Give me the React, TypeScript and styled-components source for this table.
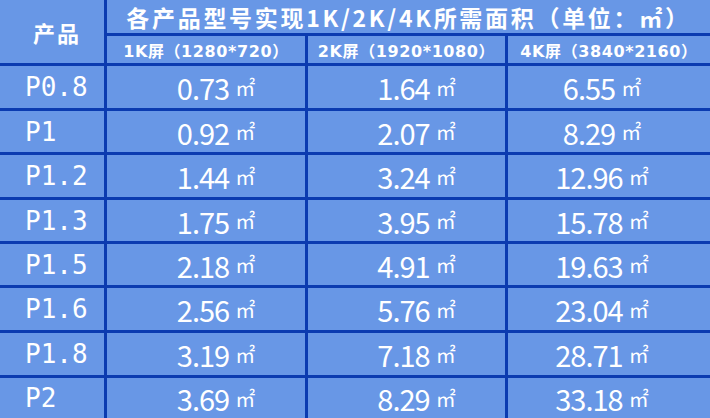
import styled, { createGlobalStyle } from "styled-components";

const GlobalStyle = createGlobalStyle`
  html, body {
    margin: 0;
    padding: 0;
    background: #0b3bb0;
    overflow: hidden;
  }
`;

const rows = [
  { name: "P0.8", k1: "0.73", k2: "1.64", k4: "6.55" },
  { name: "P1", k1: "0.92", k2: "2.07", k4: "8.29" },
  { name: "P1.2", k1: "1.44", k2: "3.24", k4: "12.96" },
  { name: "P1.3", k1: "1.75", k2: "3.95", k4: "15.78" },
  { name: "P1.5", k1: "2.18", k2: "4.91", k4: "19.63" },
  { name: "P1.6", k1: "2.56", k2: "5.76", k4: "23.04" },
  { name: "P1.8", k1: "3.19", k2: "7.18", k4: "28.71" },
  { name: "P2", k1: "3.69", k2: "8.29", k4: "33.18" },
];

export default function App() {
  return (
    <>
      <GlobalStyle />
      <Table>
        <ProductHead>产品</ProductHead>
        <Title>各产品型号实现1K/2K/4K所需面积（单位：㎡）</Title>
        <SubHead>1K屏（1280*720）</SubHead>
        <SubHead>2K屏（1920*1080）</SubHead>
        <SubHead>4K屏（3840*2160）</SubHead>
        {rows.map((r) => (
          <Row key={r.name}>
            <NameCell>{r.name}</NameCell>
            <ValueCell $shift={20}>
              {r.k1}
              <Unit>㎡</Unit>
            </ValueCell>
            <ValueCell $shift={20}>
              {r.k2}
              <Unit>㎡</Unit>
            </ValueCell>
            <ValueCell $shift={-14}>
              {r.k4}
              <Unit>㎡</Unit>
            </ValueCell>
          </Row>
        ))}
      </Table>
    </>
  );
}

const Table = styled.div`
  display: grid;
  grid-template-columns: 104px 198px 197px 1fr;
  grid-template-rows: 33px 27px 42px 41px 42px 41px 41px 42px 42px 40px;
  gap: 3px;
  width: 710px;
  height: 418px;
  background: #0b3bb0;
  color: #ffffff;
  font-family: "Noto Sans CJK SC", "Noto Sans", sans-serif;
`;

const Cell = styled.div`
  background: #6897e6;
  display: flex;
  align-items: center;
  justify-content: center;
  white-space: nowrap;
  overflow: hidden;
`;

const ProductHead = styled(Cell)`
  grid-row: 1 / span 2;
  font-size: 22px;
  font-weight: 700;
  letter-spacing: 2px;
  padding-left: 10px;
`;

const Title = styled(Cell)`
  grid-column: 2 / span 3;
  font-size: 23px;
  font-weight: 700;
  letter-spacing: 2.7px;
`;

const SubHead = styled(Cell)`
  font-family: "DejaVu Sans", "Noto Sans CJK SC", sans-serif;
  font-size: 16px;
  font-weight: 700;
  letter-spacing: 0.6px;
`;

const Row = styled.div`
  display: contents;
`;

const NameCell = styled(Cell)`
  justify-content: flex-start;
  padding-left: 25px;
  font-family: "DejaVu Sans Mono", "Liberation Mono", monospace;
  font-size: 26px;
`;

const ValueCell = styled(Cell)<{ $shift: number }>`
  padding-left: ${(p) => Math.max(p.$shift, 0)}px;
  padding-right: ${(p) => Math.max(-p.$shift, 0)}px;
  font-size: 29px;
  letter-spacing: -1px;
`;

const Unit = styled.span`
  font-size: 20px;
  margin-left: 6px;
  letter-spacing: 0;
`;
